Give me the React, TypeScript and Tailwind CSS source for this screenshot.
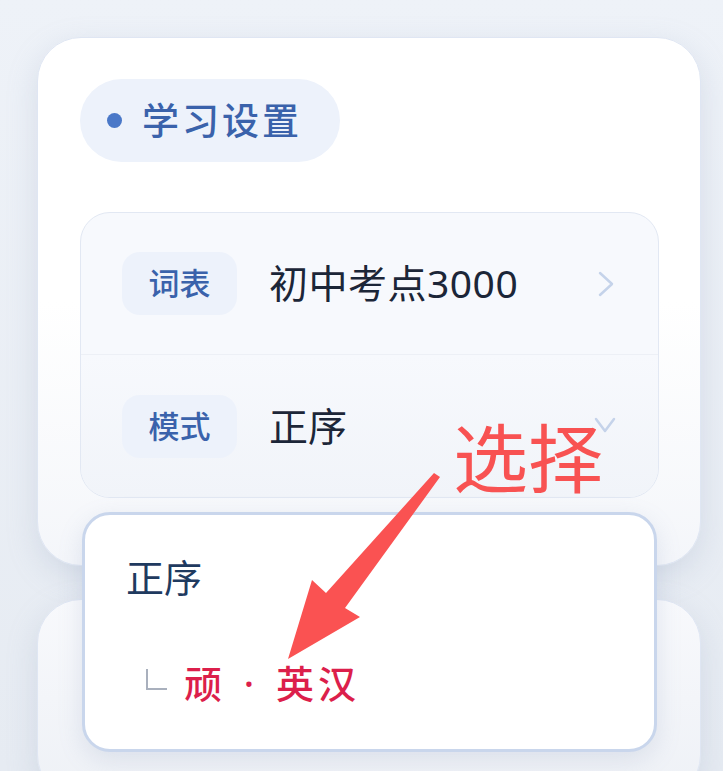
import React from 'react';

const font = { fontFamily: '"Noto Sans", "Noto Sans CJK SC", sans-serif' };

const Tag: React.FC<{ label: string }> = ({ label }) => (
  <div className="flex h-[63px] w-[115px] items-center justify-center rounded-[18px] bg-[#edf2fb] text-[31px] font-medium text-[#3a62ab]">
    {label}
  </div>
);

const App: React.FC = () => {
  return (
    <div
      className="relative h-[771px] w-full overflow-hidden bg-gradient-to-b from-[#eef2f8] to-[#e6ebf2] pl-[37px] pr-[22px] pt-[37px]"
      style={font}
    >
      {/* Settings card */}
      <div className="rounded-[44px] border border-[#dfe6f3] bg-gradient-to-b from-white via-white to-[#f4f6fa] pl-[42px] pr-[41px] pt-[41px] pb-[67px] shadow-[0_10px_30px_rgba(148,163,190,0.25)]">
        <div className="inline-flex h-[83px] items-center gap-[20px] rounded-full bg-[#edf2fb] pl-[27px] pr-[38px]">
          <span className="h-[15px] w-[15px] rounded-full bg-[#4a78c8]" />
          <span className="text-[37px] font-medium tracking-[3px] text-[#3a62ab]">学习设置</span>
        </div>

        <div className="mt-[50px] overflow-hidden rounded-[30px] border border-[#e2e8f3] bg-[#f7f9fd]">
          <div className="flex h-[142px] items-center border-b border-[#edf0f6] pl-[41px] pr-[43px]">
            <Tag label="词表" />
            <span className="ml-[32px] flex-1 text-[39px] tracking-[0.5px] text-[#1c2638]">初中考点3000</span>
            <svg width="18" height="28" viewBox="0 0 18 28" fill="none">
              <path d="M3 3 L15 14 L3 25" stroke="#c5d3ea" strokeWidth="2.5" strokeLinecap="round" strokeLinejoin="round" />
            </svg>
          </div>
          <div className="flex h-[142px] items-center bg-gradient-to-b from-[#f7f9fd] to-[#f1f4f9] pl-[41px] pr-[41px]">
            <Tag label="模式" />
            <span className="ml-[32px] flex-1 text-[39px] text-[#1c2638]">正序</span>
            <svg width="24" height="20" viewBox="0 0 24 20" fill="none" className="-mt-[2px]">
              <path d="M3 4 L12 16 L21 4" stroke="#c5d3ea" strokeWidth="2.5" strokeLinecap="round" strokeLinejoin="round" />
            </svg>
          </div>
        </div>
      </div>

      {/* Next card (partly hidden) */}
      <div className="mt-[33px] h-[200px] rounded-[44px] border border-[#dfe6f3] bg-gradient-to-b from-[#f8f9fc] to-[#eef1f6] shadow-[0_10px_30px_rgba(148,163,190,0.25)]" />

      {/* Dropdown menu */}
      <div className="absolute left-[82px] top-[512px] h-[240px] w-[575px] rounded-[28px] border-[3px] border-[#c9d6ec] bg-white pl-[41px] pr-[43px] pt-[34px] shadow-[0_8px_24px_rgba(120,140,180,0.18)]">
        <div className="text-[38px] leading-[56px] text-[#1f3a5f]">正序</div>
        <div className="mt-[50px] flex items-center pl-[20px]">
          <span className="mb-[8px] h-[21px] w-[21px] border-b-2 border-l-2 border-[#a9b0bd]" />
          <span className="ml-[17px] flex items-center text-[38px] font-medium text-[#dc1f4b]">
            <span>顽</span>
            <span className="w-[54px] text-center">·</span>
            <span className="tracking-[4px]">英汉</span>
          </span>
        </div>
      </div>

      {/* Annotation */}
      <div className="absolute left-[453px] top-[408px] text-[75px] leading-[100px] text-[#f85252]">选择</div>
      <svg className="pointer-events-none absolute left-0 top-0" width="723" height="771" viewBox="0 0 723 771">
        <polygon
          points="434,473 326,593 312,580 288,659 360,617 345,608 440,477"
          fill="#fa5252"
          strokeLinejoin="round"
        />
      </svg>
    </div>
  );
};

export default App;
